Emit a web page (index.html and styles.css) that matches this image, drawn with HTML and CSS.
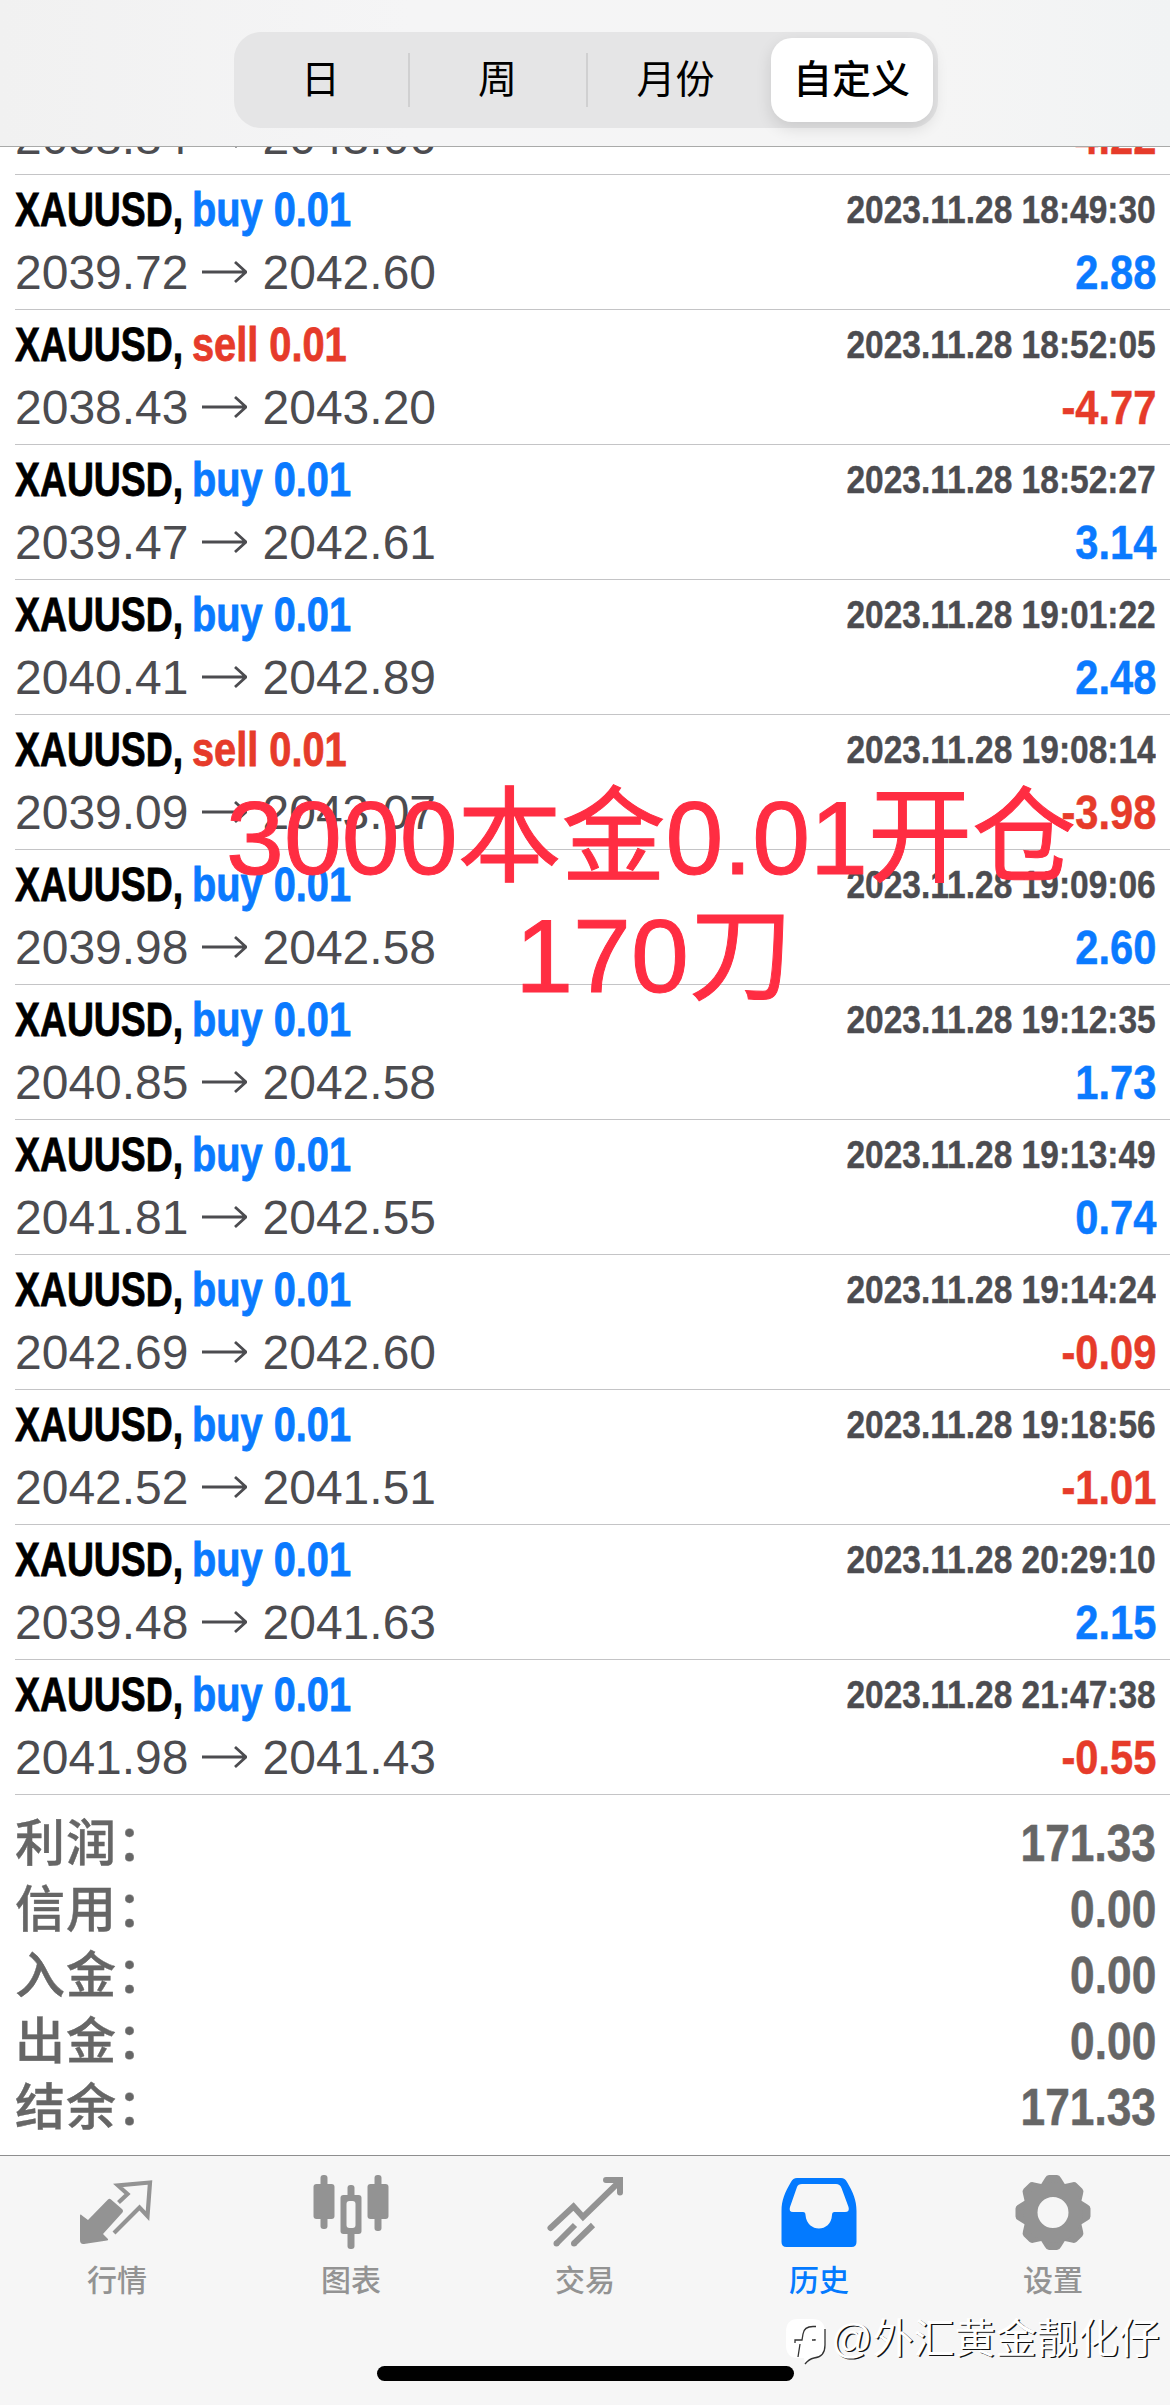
FILE: index.html
```html
<!DOCTYPE html>
<html lang="zh-CN">
<head>
<meta charset="utf-8">
<title>历史</title>
<link rel="stylesheet" href="styles.css">
</head>
<body>
<div class="screen">
<header class="topbar">
  <div class="segments">
    <div class="segment">日</div>
    <div class="segment divided">周</div>
    <div class="segment divided">月份</div>
    <div class="segment active"><span class="pill">自定义</span></div>
  </div>
</header>
<main class="history" id="history"></main>
<nav class="tabbar">
  <div class="tab">
    <svg class="icon" viewBox="0 0 84 84"><g transform="translate(-3 0)"><path d="M8 42Q8 39.500 10 41.500L16 46L36 25.500Q37.500 24 39 25.500L50 35Q52 37 50 39L31 60L35.500 64.500Q37 66 35 66.500L12 70Q8 70.500 8 66Z" fill="currentColor"/><path d="M46.500 28.500L55.500 20L46 11.500L78 8.500L75.500 42L67.500 33.500L42 59" fill="none" stroke="currentColor" stroke-width="4.200"/></g></svg>
    <span>行情</span>
  </div>
  <div class="tab">
    <svg class="icon" viewBox="0 0 84 84"><g fill="currentColor"><rect x="11.500" y="1" width="7" height="54" rx="3"/><rect x="4.500" y="10" width="21" height="35" rx="3"/><rect x="65.500" y="1" width="7" height="56" rx="3"/><rect x="58.500" y="10" width="21" height="35" rx="3"/><rect x="38.500" y="11" width="7" height="64" rx="3"/><rect x="31.500" y="21" width="21" height="39" rx="3"/></g><rect x="37.500" y="27" width="9" height="27" rx="3" fill="#f6f6f6"/></svg>
    <span>图表</span>
  </div>
  <div class="tab">
    <svg class="icon" viewBox="0 0 84 84" fill="none" stroke="currentColor" stroke-width="6"><path d="M7.500 54L30.500 32.500L40 43L76 8" stroke-linecap="round"/><path d="M63 6H77V18.500" stroke-linecap="round"/><path d="M13.500 69.500L32 51M31 69.500L50 51"/><g fill="currentColor" stroke="none"><circle cx="13.500" cy="69.500" r="3"/><circle cx="31" cy="69.500" r="3"/></g></svg>
    <span>交易</span>
  </div>
  <div class="tab current">
    <svg class="icon" viewBox="0 0 84 84"><path fill="currentColor" fill-rule="evenodd" d="M20 4H64Q68 4 70 8C76 18 79.500 26 79.500 37V68Q79.500 73 74.500 73H9.500Q4.500 73 4.500 68V37C4.500 26 8 18 14 8Q16 4 20 4ZM25 10Q21 10 20 13L13 33Q11.500 38 16 38H26Q28.500 38 28.500 41C30 59 54 59 55 41Q55 38 57.500 38H68Q73 38 71.500 33L64.500 14Q63 10 59 10Z"/></svg>
    <span>历史</span>
  </div>
  <div class="tab">
    <svg class="icon" viewBox="0 0 84 84"><g fill="currentColor"><g id="teeth"></g><path fill-rule="evenodd" d="M42 8.500A30 30 0 1 1 42 68.500A30 30 0 1 1 42 8.500ZM42 23A15.500 15.500 0 1 0 42 54A15.500 15.500 0 1 0 42 23Z"/></g></svg>
    <span>设置</span>
  </div>
</nav>
<div class="caption">3000本金0.01开仓<br><span class="second">170刀</span></div>
<div class="home"></div>
<div class="watermark">
  <svg viewBox="0 0 44 50"><path class="badge" d="M13 4H27Q40 4 40 17V30Q40 42 29 43Q24 44 20 49L19 43H13Q1 43 1 30V17Q1 4 13 4Z"/><path class="mark" d="M40 14V30Q40 42 29 43Q24 44 20 49M31 11.500H28Q19 11.500 18 19L17 25H10V28M15 29L13 42M27 25H30V24"/></svg>
  <span>@外汇黄金靓化仔</span>
</div>
</div>
<script src="app.js"></script>
</body>
</html>
```
FILE: styles.css
```css
* { box-sizing: border-box; }
body { margin: 0; background: #fff; }
.screen {
  position: relative;
  width: 1170px;
  height: 2405px;
  overflow: hidden;
  display: flex;
  flex-direction: column;
  font-family: "Liberation Sans", "Noto Sans CJK SC", sans-serif;
}
.topbar {
  flex: none;
  height: 147px;
  padding: 32px 0 0 1px;
  background: linear-gradient(90deg, #f1f1f1, #f5f5f6 35%, #f5f5f5 80%, #f1f3f4);
  border-bottom: 1px solid #a9aaa9;
  display: flex;
  justify-content: center;
  align-items: flex-start;
}
.segments {
  width: 704px;
  height: 96px;
  border-radius: 27px;
  background: #e5e5e6;
  display: grid;
  grid-template-columns: 174px 178px 178px 1fr;
  align-items: center;
}
.segment {
  height: 54px;
  display: flex;
  align-items: center;
  justify-content: center;
  font-size: 39px;
  line-height: 54px;
}
.segment.divided { border-left: 2px solid #d0d0d1; }
.segment.active { padding-left: 2px; }
.pill {
  flex: none;
  width: 162px;
  height: 84px;
  border-radius: 21px;
  background: #fff;
  box-shadow: 0 6px 16px rgba(0, 0, 0, .12);
  display: flex;
  align-items: center;
  justify-content: center;
  font-weight: 500;
}
.history {
  flex: none;
  height: 2008px;
  overflow: hidden;
}
.deal {
  height: 135px;
  margin-left: 15px;
  padding: 8px 14px 0 0;
  border-bottom: 1px solid #c4c4c6;
}
.deal.clipped { margin-top: -107px; }
.line {
  display: flex;
  justify-content: space-between;
  height: 63px;
  line-height: 54px;
  font-size: 48px;
  white-space: nowrap;
  color: #4c4c50;
}
.title { display: flex; font-weight: 700; -webkit-text-stroke: .8px currentColor; }
.symbol { color: #000; transform: scaleX(.778); transform-origin: 0 0; }
.side { margin-left: -39px; transform: scaleX(.828); transform-origin: 0 0; }
.buy, .up { color: #0a7aff; }
.sell, .down { color: #e63b2a; }
.time { font-size: 38px; font-weight: 700; transform: scaleX(.882); transform-origin: 100% 0; -webkit-text-stroke: .4px currentColor; }
.prices { display: flex; }
.arrow { width: 46px; height: 54px; margin: 0 16px 0 12px; fill: none; stroke: currentColor; stroke-width: 2.800; }
.value { font-weight: 700; transform: scaleX(.868); transform-origin: 100% 0; -webkit-text-stroke: .5px currentColor; }
.totals { padding: 16px 14px 0 15px; color: #666; }
.total {
  display: flex;
  justify-content: space-between;
  height: 66px;
  line-height: 66px;
  font-size: 51px;
}
.label { font-size: 50px; font-weight: 500; letter-spacing: 1px; -webkit-text-stroke: .4px currentColor; }
.tabbar {
  flex: none;
  height: 250px;
  background: #f6f6f6;
  border-top: 1px solid #8e8e8f;
  display: grid;
  grid-template-columns: repeat(5, 1fr);
}
.tab {
  padding-top: 18px;
  display: flex;
  flex-direction: column;
  align-items: center;
  color: #939393;
  font-size: 30px;
  font-weight: 500;
  line-height: 40px;
}
.icon { width: 84px; height: 84px; margin-bottom: 3px; }
.current { color: #037aff; }
.caption {
  position: absolute;
  left: 226px;
  top: 779px;
  width: 850px;
  text-align: center;
  white-space: nowrap;
  font-size: 104px;
  line-height: 118px;
  color: #ff2d42;
  -webkit-text-stroke: 1px currentColor;
}
.second { margin-left: 6px; }
.home {
  position: absolute;
  left: 377px;
  top: 2366px;
  width: 417px;
  height: 15px;
  border-radius: 8px;
  background: #000;
}
.watermark {
  position: absolute;
  left: 785px;
  top: 2315px;
  display: flex;
  color: #fff;
  font-size: 41px;
  line-height: 48px;
  white-space: nowrap;
  text-shadow: 1.5px 1px 0 #111;
}
.watermark svg { width: 44px; height: 50px; margin-right: 2px; }
.badge { fill: #fff; }
.mark { fill: none; stroke: #333; stroke-width: 1.300; }
```
FILE: app.js
```javascript
const deals = [
  ["sell", "2038.84", "2043.06", "18:46:12", "-4.22"],
  ["buy", "2039.72", "2042.60", "18:49:30", "2.88"],
  ["sell", "2038.43", "2043.20", "18:52:05", "-4.77"],
  ["buy", "2039.47", "2042.61", "18:52:27", "3.14"],
  ["buy", "2040.41", "2042.89", "19:01:22", "2.48"],
  ["sell", "2039.09", "2043.07", "19:08:14", "-3.98"],
  ["buy", "2039.98", "2042.58", "19:09:06", "2.60"],
  ["buy", "2040.85", "2042.58", "19:12:35", "1.73"],
  ["buy", "2041.81", "2042.55", "19:13:49", "0.74"],
  ["buy", "2042.69", "2042.60", "19:14:24", "-0.09"],
  ["buy", "2042.52", "2041.51", "19:18:56", "-1.01"],
  ["buy", "2039.48", "2041.63", "20:29:10", "2.15"],
  ["buy", "2041.98", "2041.43", "21:47:38", "-0.55"]
];
const totals = [["利润", "171.33"], ["信用", "0.00"], ["入金", "0.00"], ["出金", "0.00"], ["结余", "171.33"]];
const arrow = '<svg class="arrow" viewBox="0 0 46 54"><path d="M1 26H45M34 16L45 26L34 36"/></svg>';

document.getElementById("history").innerHTML =
  deals.map(([side, open, close, time, value], i) => `
  <section class="deal${i ? "" : " clipped"}">
    <div class="line"><span class="title"><span class="symbol">XAUUSD,</span><span class="side ${side}">${side} 0.01</span></span><span class="time">2023.11.28 ${time}</span></div>
    <div class="line"><span class="prices">${open}${arrow}${close}</span><span class="value ${value[0] === "-" ? "down" : "up"}">${value}</span></div>
  </section>`).join("") +
  `<section class="totals">${totals.map(([name, value]) =>
    `<div class="total"><span class="label">${name}：</span><span class="value">${value}</span></div>`).join("")}</section>`;

document.getElementById("teeth").innerHTML = Array.from({ length: 8 }, (_, i) =>
  `<path transform="rotate(${i * 45} 42 38.500)" d="M29 12L34 4Q35.500 1 38 1H46Q48.500 1 50 4L55 12Z"/>`).join("");
```
